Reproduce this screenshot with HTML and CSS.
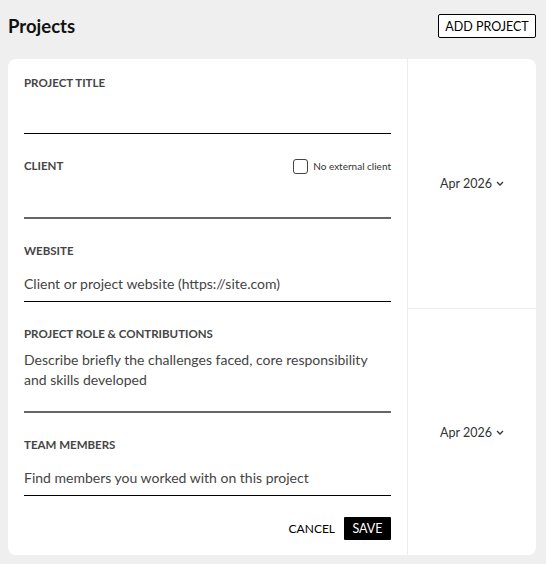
FILE: index.html
```html
<!DOCTYPE html>
<html lang="en">
<head>
    <meta charset="UTF-8">
    <meta name="viewport" content="width=device-width, initial-scale=1.0">
    <title>Projects</title>
    <link rel="stylesheet" href="styles.css">
</head>
<body>
    <div class="page-header">
        <h1>Projects</h1>
        <button class="add-button">ADD PROJECT</button>
    </div>

    <div class="project-card">
        <form class="project-form">
            <!-- Title -->
            <div class="field">
                <div class="field-label">Project Title</div>
                <input type="text" class="field-input">
            </div>

            <!-- Client -->
            <div class="field">
                <div class="field-label-row">
                    <div class="field-label">Client</div>
                    <label class="check-label"><input type="checkbox" class="check-box"> No external client</label>
                </div>
                <input type="text" class="field-input field-input-gray">
            </div>

            <!-- Website -->
            <div class="field">
                <div class="field-label">Website</div>
                <input type="text" class="field-input" placeholder="Client or project website (https://site.com)">
            </div>

            <!-- Role -->
            <div class="field">
                <div class="field-label">Project Role &amp; Contributions</div>
                <textarea class="field-textarea" rows="3" placeholder="Describe briefly the challenges faced, core responsibility and skills developed"></textarea>
            </div>

            <!-- Team -->
            <div class="field">
                <div class="field-label">Team Members</div>
                <input type="text" class="field-input" placeholder="Find members you worked with on this project">
            </div>

            <div class="form-actions">
                <button type="button" class="cancel-button">CANCEL</button>
                <button type="button" class="save-button">SAVE</button>
            </div>
        </form>

        <div class="date-column">
            <div class="date-cell">
                <span class="date-select">Apr 2026
                    <svg width="8" height="5" viewBox="0 0 8 5"><path d="M1 1l3 3 3-3" fill="none" stroke="#333" stroke-width="1.3"/></svg>
                </span>
            </div>
            <div class="date-cell date-cell-end">
                <span class="date-select">Apr 2026
                    <svg width="8" height="5" viewBox="0 0 8 5"><path d="M1 1l3 3 3-3" fill="none" stroke="#333" stroke-width="1.3"/></svg>
                </span>
            </div>
        </div>
    </div>
</body>
</html>
```

FILE: styles.css
```css
body {
    font-family: Lato, "Open Sans", sans-serif;
    background: #efefef;
    margin: 0;
    padding: 14px 10px 0 8px;
    color: #000;
}

.page-header {
    display: flex;
    justify-content: space-between;
    align-items: center;
    height: 24px;
    margin-bottom: 21px;
}

h1 {
    font-size: 18.5px;
    font-weight: 700;
    margin: 0;
    color: #111;
}

.add-button {
    height: 24px;
    width: 98px;
    padding: 0;
    background: #fff;
    border: 1px solid #000;
    border-radius: 2px;
    font-family: inherit;
    font-size: 12.5px;
    color: #000;
    cursor: pointer;
}

.project-card {
    display: grid;
    grid-template-columns: 399px 1fr;
    background: #fff;
    border-radius: 8px;
    height: 496px;
}

.project-form {
    padding: 16px 16px 17px;
}

.field {
    margin-bottom: 24px;
}

.field-label {
    font-size: 11.5px;
    font-weight: 700;
    line-height: 16px;
    color: #454545;
    text-transform: uppercase;
}

.field-label-row {
    display: flex;
    justify-content: space-between;
    align-items: center;
}

.check-label {
    display: flex;
    align-items: center;
    gap: 5px;
    font-size: 10px;
    color: #333;
}

.check-box {
    appearance: none;
    width: 15px;
    height: 15px;
    margin: 0;
    border: 1px solid #444;
    border-radius: 3px;
    background: #fff;
}

.field-input {
    display: block;
    width: 100%;
    box-sizing: border-box;
    height: 29px;
    margin-top: 14px;
    padding: 0 0 8px;
    border: none;
    border-bottom: 1px solid #000;
    font-family: inherit;
    font-size: 14px;
    line-height: 20px;
    color: #444;
    outline: none;
}

.field-input-gray {
    height: 31px;
    border-bottom: 2px solid #666;
}

.field-textarea {
    display: block;
    width: 100%;
    box-sizing: border-box;
    height: 63px;
    margin-top: 8px;
    padding: 0 0 1px;
    border: none;
    border-bottom: 2px solid #666;
    font-family: inherit;
    font-size: 14px;
    line-height: 20px;
    color: #444;
    resize: none;
    outline: none;
}

.field-input::placeholder,
.field-textarea::placeholder {
    color: #444;
    opacity: 1;
}

.form-actions {
    display: flex;
    justify-content: flex-end;
    align-items: center;
    gap: 9px;
    margin-top: -3px;
}

.cancel-button,
.save-button {
    height: 23px;
    border: none;
    font-family: inherit;
    font-size: 12px;
    cursor: pointer;
}

.cancel-button {
    background: none;
    padding: 0;
    color: #000;
}

.save-button {
    background: #000;
    color: #fff;
    width: 47px;
    padding: 0;
    border-radius: 1px;
    font-size: 12.5px;
}

.date-column {
    display: flex;
    flex-direction: column;
    border-left: 1px solid #ededed;
}

.date-cell {
    flex: 1;
    display: flex;
    justify-content: center;
    align-items: center;
}

.date-cell-end {
    border-top: 1px solid #ededed;
}

.date-select {
    display: flex;
    align-items: center;
    gap: 4px;
    font-size: 12.5px;
    color: #333;
}
```
